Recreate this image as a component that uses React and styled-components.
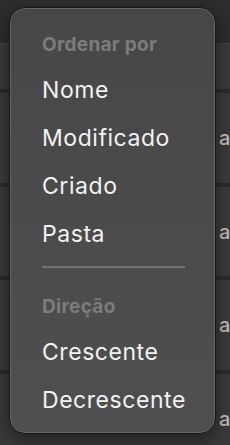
import styled, { createGlobalStyle } from "styled-components";

const GlobalStyle = createGlobalStyle`
  html, body {
    margin: 0;
    padding: 0;
    background: #3a3a3a;
    font-family: Inter, "Noto Sans", "Liberation Sans", sans-serif;
    -webkit-font-smoothing: antialiased;
  }
`;

const Screen = styled.div`
  position: relative;
  width: 230px;
  height: 445px;
  overflow: hidden;
  background: #3a3a3a;
`;

const TopBar = styled.div`
  height: 44px;
  background: #2d2d2d;
  border-bottom: 1px solid #454545;
  box-sizing: border-box;
`;

const ListRow = styled.div`
  height: ${(p) => p.$height || 94}px;
  box-sizing: border-box;
  border-bottom: 4px solid #2b2b2b;
  display: flex;
  align-items: center;
  padding-left: 219px;
  color: #bcbcbc;
  font-size: 20px;
  font-weight: 500;
  white-space: nowrap;
  overflow: hidden;
`;

const Menu = styled.div`
  position: absolute;
  left: 9px;
  top: 7px;
  width: 207px;
  height: 427px;
  box-sizing: border-box;
  border-radius: 16px;
  background: linear-gradient(180deg, #474747 0%, #4f4f4f 100%);
  border: 1px solid #161616;
  box-shadow: inset 0 0 0 1px #666666, 0 6px 18px rgba(0, 0, 0, 0.45);
  padding: 14px 0 0 32px;
  display: flex;
  flex-direction: column;
`;

const SectionTitle = styled.div`
  height: 44px;
  display: flex;
  align-items: center;
  color: #7c7c7c;
  font-size: 19px;
  font-weight: 700;
  letter-spacing: 0.3px;
`;

const Item = styled.div`
  height: 48px;
  display: flex;
  align-items: center;
  color: #f2f2f2;
  font-size: 23px;
  font-weight: 400;
  letter-spacing: 0.55px;
`;

const Divider = styled.div`
  height: 2px;
  width: 143px;
  margin: 8px 0 16px;
  background: #737373;
`;

export default function App() {
  return (
    <>
      <GlobalStyle />
      <Screen>
        <TopBar />
        <ListRow $height={49} />
        <ListRow>a</ListRow>
        <ListRow $height={93}>a</ListRow>
        <ListRow>a</ListRow>
        <ListRow>a</ListRow>
        <Menu>
          <SectionTitle>Ordenar por</SectionTitle>
          <Item>Nome</Item>
          <Item>Modificado</Item>
          <Item>Criado</Item>
          <Item>Pasta</Item>
          <Divider />
          <SectionTitle>Direção</SectionTitle>
          <Item>Crescente</Item>
          <Item>Decrescente</Item>
        </Menu>
      </Screen>
    </>
  );
}
